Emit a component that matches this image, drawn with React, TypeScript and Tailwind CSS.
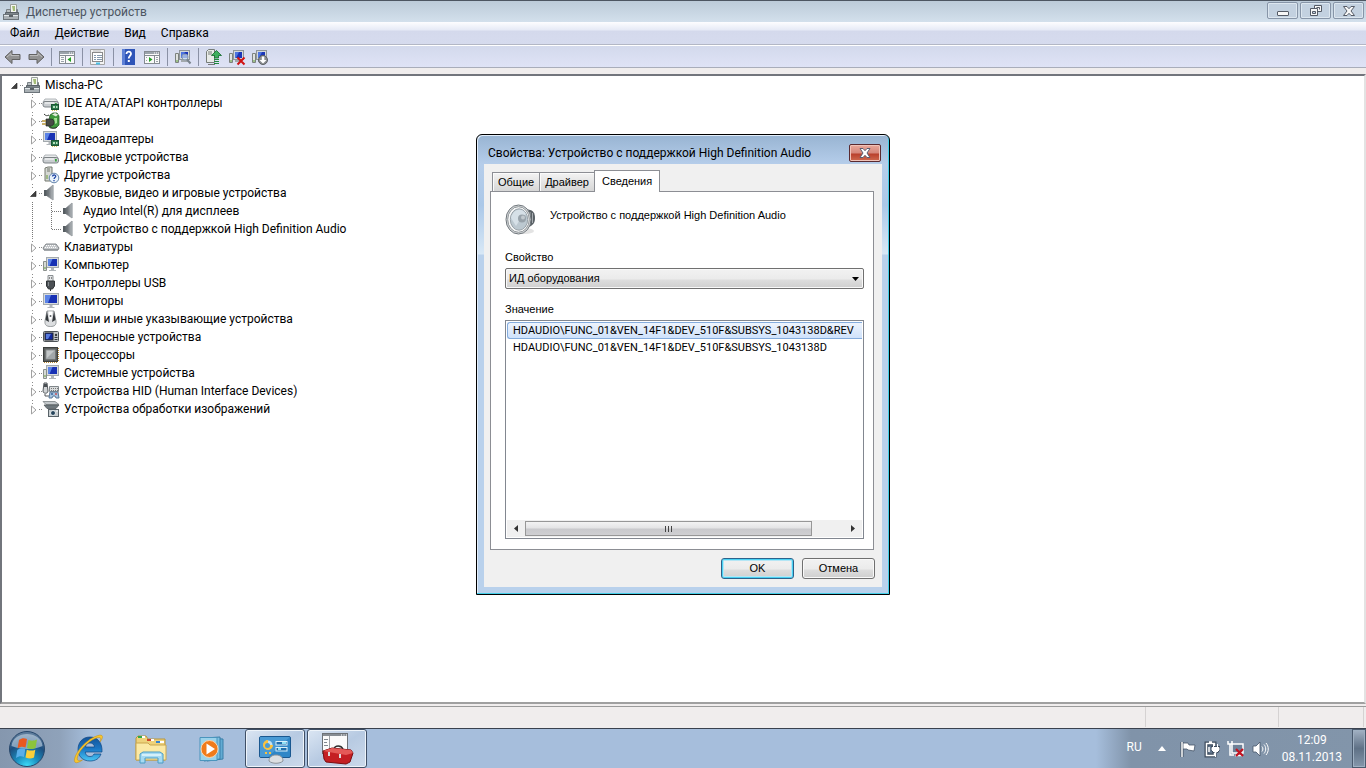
import type { ReactNode } from "react"

const toolbarFg = "w-[18px] h-[18px] shrink-0"

function Icon({ children, size = "w-[18px] h-[18px]", box = "0 0 18 18" }: { children: ReactNode; size?: string; box?: string }) {
  return (
    <svg className={`${size} shrink-0`} viewBox={box} aria-hidden="true">
      {children}
    </svg>
  )
}

/* ---------- device icons ---------- */

function PrinterPcIcon() {
  return (
    <Icon>
      <path d="M8.500 1.500h6v8h-6z" fill="#f4f6f0" stroke="#9aa09c" />
      <path d="M10 3h3v5h-2z" fill="#a5bd78" />
      <path d="M4.500 9.500v-3h4v3M14.500 9.500v-3h1v3" fill="#b9bfc2" stroke="#7a8286" />
      <path d="M3.500 9.500h13v3h-13z" fill="#7f878c" stroke="#596167" />
      <rect x="1.500" y="11.500" width="15" height="5" fill="#a9b0b4" stroke="#6c747a" />
      <path d="M2 12.500h14" stroke="#e3e8ea" />
      <rect x="7" y="12" width="4" height="2" fill="#5a6166" />
    </Icon>
  )
}

function Drive({ y = 4 }: { y?: number }) {
  return (
    <g transform={`translate(0 ${y})`}>
      <path d="M3 1h11l2 3H1z" fill="#e9ebec" stroke="#a0a5a9" strokeWidth=".8" />
      <rect x="1" y="3.500" width="15.500" height="5.500" rx="2" fill="#c9cdd0" stroke="#73797d" strokeWidth=".9" />
      <path d="M3 5h9" stroke="#fff" />
      <rect x="13" y="5" width="1.800" height="2.500" fill="#3aa13e" />
    </g>
  )
}

function Chip() {
  return (
    <g>
      <rect x="9.500" y="10.500" width="7" height="5" fill="#2c7a4b" stroke="#1d5535" />
      <path d="M11 12h2v2h-2zM14 12h1.500v2H14z" fill="#b8e0bf" />
      <path d="M10 16.500h6" stroke="#d9c25b" strokeDasharray="1 1" />
    </g>
  )
}

function Screen({ x = 2, y = 2, w = 14, h = 10 }: { x?: number; y?: number; w?: number; h?: number }) {
  return (
    <g>
      <rect x={x + 0.5} y={y + 0.5} width={w} height={h} fill="#d7dbdd" stroke="#a4aaae" />
      <rect x={x + 2} y={y + 2} width={w - 3} height={h - 3} fill="#1731b4" />
      <path d={`M${x + 2} ${y + 2}h${(w - 3) / 2}l-3 ${h - 3}h-${(w - 3) / 2 - 3}z`} fill="#5b83e6" />
      <path d={`M${x + w / 2 - 1} ${y + h + 1}h3v2h2v1h-7v-1h2z`} fill="#b1b6ba" />
    </g>
  )
}

function IdeIcon() {
  return <Icon><Drive y={4} /><Chip /></Icon>
}

function BatteryIcon() {
  return (
    <Icon>
      <path d="M8 3l3-2h4l2 3v9l-3 3H8l-2-3z" fill="#3f9a3d" stroke="#2b5e2c" strokeWidth=".8" />
      <path d="M10 2.500l3-1.500 3 1.500-2 2z" fill="#e3ecdd" />
      <path d="M12 6h3v5l-2 1z" fill="#a3e294" />
      <path d="M4 7h4c3 0 4 1 4 3.500S10 14 8 14H4z" fill="#484b46" stroke="#252825" strokeWidth=".7" />
      <path d="M0 9h4M0 12h4" stroke="#b8963c" strokeWidth="1.300" />
      <path d="M2 2c2 2 3 2 5 1M8 14c1 3 4 3 7 1" stroke="#343734" fill="none" />
    </Icon>
  )
}

function VideoIcon() {
  return <Icon><Screen x={1} y={1} w={13} h={10} /><Chip /></Icon>
}

function DiskIcon() {
  return <Icon><Drive y={6} /></Icon>
}

function OtherIcon() {
  return (
    <Icon>
      <path d="M3 2l3-1h4v14H3z" fill="#d5d8d4" stroke="#74796f" />
      <path d="M5 3h3M5 5h3" stroke="#74796f" />
      <path d="M5 9v4" stroke="#6a9b35" />
      <circle cx="12" cy="12" r="4.800" fill="#e9f2fb" stroke="#6485aa" />
      <path d="M10.500 10.500c0-2 3.500-2 3.200 0-.2 1.200-1.600 1.100-1.600 2.500M12 14v1.200" stroke="#2146a6" fill="none" strokeWidth="1.300" />
    </Icon>
  )
}

function SpeakerIcon() {
  return (
    <Icon>
      <defs>
        <linearGradient id="cone" x1="0" x2="1">
          <stop offset="0" stopColor="#5c6267" />
          <stop offset="1" stopColor="#b5babe" />
        </linearGradient>
      </defs>
      <path d="M2 6h4v6H2z" fill="#565d62" />
      <path d="M5 6l6-5v15l-6-4z" fill="url(#cone)" stroke="#81878c" strokeWidth=".6" />
      <path d="M11 1v15" stroke="#a5abaf" />
    </Icon>
  )
}

function KeyboardIcon() {
  return (
    <Icon>
      <path d="M4 6h10l3 4-1 2H2l-1-2z" fill="#c5c8cb" stroke="#6b7074" strokeWidth=".8" />
      <path d="M4 7.500h10M3 9.500h12" stroke="#fff" strokeDasharray="1 1" />
      <path d="M2 12h14" stroke="#868b8f" />
    </Icon>
  )
}

function ComputerIcon() {
  return (
    <Icon>
      <Screen x={4} y={1} w={12} h={10} />
      <path d="M1.500 5.500h3v9h-3z" fill="#d6dad6" stroke="#8a908c" />
      <path d="M3 11v2" stroke="#69a03c" />
    </Icon>
  )
}

function UsbIcon() {
  return (
    <Icon>
      <path d="M6 1.500h5v6H6z" fill="#e4e7e9" stroke="#8a8f92" />
      <path d="M7 3h1v2H7zM9 3h1v2H9z" fill="#888" />
      <path d="M4.500 7h8v5l-2 3h-4l-2-3z" fill="#4b5054" stroke="#303437" />
      <path d="M8 15h1v2H8z" fill="#303437" />
      <path d="M6.500 8v4" stroke="#868c90" />
    </Icon>
  )
}

function MonitorIcon() {
  return <Icon><Screen x={1} y={1} w={15} h={11} /></Icon>
}

function MouseIcon() {
  return (
    <Icon>
      <path d="M5 1h7l2 10c.5 4-1.500 5.500-5.500 5.500S2.500 15 3 11z" fill="#dcdee0" stroke="#84898c" strokeWidth=".8" />
      <path d="M5 1L3.500 10 7 12zM12 1l1.500 9-3.500 2z" fill="#34383c" />
      <path d="M6.500 1.500h4l-1 8h-2z" fill="#fff" />
      <circle cx="8.500" cy="6" r="1" fill="#5b6064" />
    </Icon>
  )
}

function PortableIcon() {
  return (
    <Icon>
      <rect x="1.500" y="3.500" width="15" height="10" rx="1" fill="#c3c7ca" stroke="#4e5357" />
      <rect x="3" y="5" width="8" height="7" fill="#10289c" stroke="#26292c" />
      <path d="M4 6h5l-3 5H4z" fill="#5679dc" />
      <circle cx="14" cy="7" r="1.200" fill="#34383b" />
      <path d="M12.500 9.500h3M12.500 11.500h3" stroke="#34383b" />
    </Icon>
  )
}

function CpuIcon() {
  return (
    <Icon>
      <path d="M2 16.500h14M16.500 2v14" stroke="#b88b36" strokeDasharray="1 1" />
      <rect x="1.500" y="1.500" width="14" height="14" fill="#5b5e5d" stroke="#3c3f3e" />
      <rect x="4" y="4" width="9" height="9" fill="#c4c8c9" stroke="#8d9294" />
      <path d="M4 13l9-9v9z" fill="#a2a7a9" />
    </Icon>
  )
}

function HidIcon() {
  return (
    <Icon>
      <path d="M2 1h3l1 8c0 3-5 3-5 0z" fill="#d0d3d5" stroke="#54595d" />
      <path d="M2 2h3v3H2z" fill="#4a4f53" />
      <path d="M7.500 4.500h9v5h-9z" fill="#d9dcdd" stroke="#80868a" />
      <path d="M9 6.500h7M9 8.500h7" stroke="#777" strokeDasharray="1 1" />
      <path d="M3 12v2h4" stroke="#54595d" fill="none" />
      <path d="M8 10h8l1 6h-3l-1-2h-2l-1 2H7z" fill="#a7c2df" stroke="#5b7898" />
      <circle cx="10" cy="12" r=".9" fill="#2d5d94" />
      <circle cx="14" cy="12" r=".9" fill="#c44" />
    </Icon>
  )
}

function ImagingIcon() {
  return (
    <Icon>
      <path d="M1 1.500h12l4 3H4z" fill="#c4c9cc" stroke="#7b8184" strokeWidth=".8" />
      <path d="M2 5h15l-3 3.500H5z" fill="#6f787d" stroke="#545a5e" strokeWidth=".8" />
      <rect x="6.500" y="9.500" width="10" height="7" fill="#c8ced1" stroke="#586268" />
      <circle cx="11" cy="13" r="2.500" fill="#27455c" stroke="#e9edef" />
      <path d="M14 11h2" stroke="#fff" />
    </Icon>
  )
}

/* ---------- tree ---------- */

type TreeItem = { name: string; icon: ReactNode; open?: boolean; children?: { name: string }[] }

const devices: TreeItem[] = [
  { name: "IDE ATA/ATAPI контроллеры", icon: <IdeIcon /> },
  { name: "Батареи", icon: <BatteryIcon /> },
  { name: "Видеоадаптеры", icon: <VideoIcon /> },
  { name: "Дисковые устройства", icon: <DiskIcon /> },
  { name: "Другие устройства", icon: <OtherIcon /> },
  {
    name: "Звуковые, видео и игровые устройства",
    icon: <SpeakerIcon />,
    open: true,
    children: [{ name: "Аудио Intel(R) для дисплеев" }, { name: "Устройство с поддержкой High Definition Audio" }],
  },
  { name: "Клавиатуры", icon: <KeyboardIcon /> },
  { name: "Компьютер", icon: <ComputerIcon /> },
  { name: "Контроллеры USB", icon: <UsbIcon /> },
  { name: "Мониторы", icon: <MonitorIcon /> },
  { name: "Мыши и иные указывающие устройства", icon: <MouseIcon /> },
  { name: "Переносные устройства", icon: <PortableIcon /> },
  { name: "Процессоры", icon: <CpuIcon /> },
  { name: "Системные устройства", icon: <ComputerIcon /> },
  { name: "Устройства HID (Human Interface Devices)", icon: <HidIcon /> },
  { name: "Устройства обработки изображений", icon: <ImagingIcon /> },
]

function Expander({ open, root }: { open?: boolean; root?: boolean }) {
  return (
    <Icon size="w-[19px] h-[18px]" box="0 0 19 18">
      {!root && <path d="M9.500 0v1M9.500 3v1" stroke="#8a8a8a" />}
      <path d="M16 9.500h1M18 9.500h1" stroke="#8a8a8a" />
      {open ? (
        <path d="M13 7v5.500H7.500z" fill="#404040" stroke="#202020" strokeWidth=".6" />
      ) : (
        <path d="M8.500 6v8l4.500-4z" fill="#fff" stroke="#a0a0a0" />
      )}
    </Icon>
  )
}

function Branch({ last }: { last: boolean }) {
  return (
    <Icon size="w-[19px] h-[18px]" box="0 0 19 18">
      <path d={last ? "M9.500 0v10M10 9.500h9" : "M9.500 0v18M10 9.500h9"} stroke="#777" strokeDasharray="1 1" />
    </Icon>
  )
}

function Tree() {
  return (
    <ul className="pl-[2px] text-[12px] leading-[18px] text-black">
      <li>
        <div className="flex h-[18px] items-center">
          <Expander open root />
          <PrinterPcIcon />
          <span className="ml-1">Mischa-PC</span>
        </div>
        <ul className="pl-[19px]">
          {devices.map((d) => (
            <li key={d.name}>
              <div className="flex h-[18px] items-center">
                <Expander open={d.open} />
                {d.icon}
                <span className="ml-1 whitespace-nowrap">{d.name}</span>
              </div>
              {d.children && (
                <ul>
                  {d.children.map((c, i) => (
                    <li key={c.name} className="flex h-[18px] items-center">
                      <Icon size="w-[19px] h-[18px]" box="0 0 19 18">
                        <path d="M9.500 0v18" stroke="#777" strokeDasharray="1 1" />
                      </Icon>
                      <Branch last={i === d.children!.length - 1} />
                      <SpeakerIcon />
                      <span className="ml-1 whitespace-nowrap">{c.name}</span>
                    </li>
                  ))}
                </ul>
              )}
            </li>
          ))}
        </ul>
      </li>
    </ul>
  )
}

/* ---------- toolbar ---------- */

function ArrowIcon({ back }: { back?: boolean }) {
  return (
    <svg className={toolbarFg} viewBox="0 0 18 18">
      <path
        d={back ? "M1 9l7-6.500v4h8v5H8v4z" : "M17 9l-7-6.500v4H2v5h8v4z"}
        fill="#929292"
        stroke="#626262"
      />
      <path d={back ? "M3 9l4-3.500v2h8" : "M3 7.500h8v-2l4 3.500"} stroke="#bcbcbc" fill="none" />
    </svg>
  )
}

function PaneIcon({ right }: { right?: boolean }) {
  return (
    <svg className={toolbarFg} viewBox="0 0 18 18">
      <rect x="1.500" y="3.500" width="15" height="12" fill="#fafafa" stroke="#858b92" />
      <path d="M2 5h14" stroke="#9ba3ab" strokeWidth="2" />
      <path d="M11 5h1M13 5h1M15 5h1" stroke="#fff" />
      <path d="M2 7.500h14" stroke="#858b92" />
      {right ? (
        <>
          <path d="M11.500 8v7" stroke="#858b92" />
          <path d="M13 9.500h2M13 11.500h2M13 13.500h2M3 9.500h1M3 12.500h1" stroke="#9ba3ab" />
          <path d="M6 9v5l3.500-2.500z" fill="#22a022" />
        </>
      ) : (
        <>
          <path d="M7.500 8v7" stroke="#858b92" />
          <path d="M3 9.500h3M3 11.500h3M3 13.500h3" stroke="#9ba3ab" />
          <path d="M13 9v5l-3.500-2.500z" fill="#22a022" />
        </>
      )}
    </svg>
  )
}

function PropertiesIcon() {
  return (
    <svg className={toolbarFg} viewBox="0 0 18 18">
      <path d="M1.500 1.500h14v15h-14z" fill="#f3f3f3" stroke="#a4a4a4" />
      <rect x="3.500" y="4.500" width="10" height="9" fill="#fff" stroke="#8a8a8a" />
      <path d="M4 3h8" stroke="#bbb" />
      <path d="M5 7.500h2M8 7.500h5M5 9.500h2M8 9.500h5M5 11.500h2M8 11.500h5" stroke="#8599ad" />
      <path d="M7 15.500h4" stroke="#4bc0e6" strokeWidth="2" />
    </svg>
  )
}

function HelpIcon() {
  return (
    <svg className={toolbarFg} viewBox="0 0 18 18">
      <rect x="2" y="1" width="13" height="16" fill="#2f55b8" />
      <path d="M2 1h3v16H2z" fill="#5d80d6" />
      <path d="M6.500 6c0-3.300 5-3 4.500 0-.3 1.800-2.300 2-2.300 4.500" stroke="#fff" strokeWidth="1.800" fill="none" />
      <rect x="7.800" y="12" width="2" height="2" fill="#fff" />
    </svg>
  )
}

function MiniPc() {
  return (
    <g>
      <path d="M1.500 5.500h3v9h-3z" fill="#dfe2e0" stroke="#7c827e" />
      <path d="M3 12v2" stroke="#5aa02e" />
      <rect x="5.500" y="2.500" width="10" height="9" fill="#d3d8db" stroke="#8e959a" />
      <path d="M7 4h7v6H7z" fill="#1b36b8" />
      <path d="M7 4h4l-3 6H7z" fill="#4d74df" />
      <path d="M7 13h7" stroke="#a3a9ad" strokeWidth="2" />
    </g>
  )
}

function ScanIcon() {
  return (
    <svg className={toolbarFg} viewBox="0 0 18 18">
      <MiniPc />
      <circle cx="11" cy="9" r="3" fill="#cfe4f5" fillOpacity=".7" stroke="#8b9dae" />
      <path d="M13 11.500l3.500 4" stroke="#7a848e" strokeWidth="2" />
    </svg>
  )
}

function UpdateIcon() {
  return (
    <svg className={toolbarFg} viewBox="0 0 18 18">
      <path d="M1.500 3.500l2-2h6v13h-8z" fill="#e8ebe8" stroke="#767c78" />
      <path d="M3 4h4M3 6h4" stroke="#767c78" />
      <path d="M3 16.500h7" stroke="#777" />
      <path d="M11.500 2.500l5 5h-3V10h-4V7.500h-3z" fill="#3eaf5e" stroke="#136a2b" strokeWidth=".8" />
      <path d="M9 11.500h5M9 13.500h5M9 15.500h5" stroke="#1f8a3e" />
    </svg>
  )
}

function RemoveIcon() {
  return (
    <svg className={toolbarFg} viewBox="0 0 18 18">
      <MiniPc />
      <path d="M9.500 9.500l7 7M16.500 9.500l-7 7" stroke="#d01212" strokeWidth="2" />
    </svg>
  )
}

function DisableIcon() {
  return (
    <svg className={toolbarFg} viewBox="0 0 18 18">
      <MiniPc />
      <circle cx="12" cy="12" r="4.500" fill="#8a8d90" stroke="#5d6063" />
      <path d="M10.800 8.500h2.500v3.500h2.200L12 15.500 8.500 12h2.300z" fill="#fff" />
    </svg>
  )
}

function ToolButton({ label, children }: { label: string; children: ReactNode }) {
  return (
    <button type="button" aria-label={label} className="flex items-center">
      {children}
    </button>
  )
}

function Separator() {
  return <span className="mx-[6px] h-[18px] w-px bg-[#8a91a5]" />
}

function Toolbar() {
  return (
    <div className="flex h-[23px] items-center border-b border-t border-b-[#a9adba] border-t-white bg-gradient-to-b from-[#d3d9ec] to-[#dfe3f6] pl-1">
      <div className="flex gap-[5px]">
        <ToolButton label="Назад"><ArrowIcon back /></ToolButton>
        <ToolButton label="Вперед"><ArrowIcon /></ToolButton>
      </div>
      <Separator />
      <ToolButton label="Дерево консоли"><PaneIcon /></ToolButton>
      <Separator />
      <ToolButton label="Свойства"><PropertiesIcon /></ToolButton>
      <Separator />
      <div className="flex gap-[5px]">
        <ToolButton label="Справка"><HelpIcon /></ToolButton>
        <ToolButton label="Область действий"><PaneIcon right /></ToolButton>
      </div>
      <Separator />
      <ToolButton label="Обновить конфигурацию"><ScanIcon /></ToolButton>
      <Separator />
      <div className="flex gap-[5px]">
        <ToolButton label="Обновить драйверы"><UpdateIcon /></ToolButton>
        <ToolButton label="Удалить"><RemoveIcon /></ToolButton>
        <ToolButton label="Отключить"><DisableIcon /></ToolButton>
      </div>
    </div>
  )
}

/* ---------- main window ---------- */

function CaptionButton({ label, children }: { label: string; children: ReactNode }) {
  return (
    <button
      type="button"
      aria-label={label}
      className="flex h-[17px] w-[31px] items-center justify-center rounded-[2px] border border-[#8795a8] bg-[#c3d1e0] shadow-[inset_0_0_0_1px_#dce6ef]"
    >
      {children}
    </button>
  )
}

function TitleBar() {
  return (
    <header className="flex h-[22px] items-center border-t border-[#4d5662] bg-gradient-to-b from-[#bccbd9] to-[#d3e0ec] pl-[2px] pr-[2px]">
      <PrinterPcIcon />
      <h1 className="ml-[6px] flex-1 text-[12px] leading-[18px] text-[#4c5561]">Диспетчер устройств</h1>
      <div className="flex gap-[2px] self-start pt-px">
        <CaptionButton label="Свернуть">
          <Icon size="w-[14px] h-[12px]" box="0 0 14 12">
            <rect x="1.500" y="6.500" width="11" height="4" rx=".5" fill="#f7f7f7" stroke="#555b66" />
          </Icon>
        </CaptionButton>
        <CaptionButton label="Восстановить">
          <Icon size="w-[14px] h-[12px]" box="0 0 14 12">
            <path d="M5.500.5h7v6h-7z" fill="#f7f7f7" stroke="#555b66" />
            <path d="M7.500 2.500h3v2" fill="none" stroke="#555b66" />
            <path d="M1.500 3.500h7v7h-7z" fill="#f7f7f7" stroke="#555b66" />
            <path d="M3.500 6.500h3v2h-3z" fill="#c3d1e0" stroke="#555b66" />
          </Icon>
        </CaptionButton>
        <CaptionButton label="Закрыть">
          <Icon size="w-[14px] h-[12px]" box="0 0 14 12">
            <path d="M1.500 1.500h3.500l2 2.200 2-2.200h3.500L9 6l3.500 4.500H9L7 8.300 5 10.500H1.500L5 6z" fill="#f7f7f7" stroke="#555b66" />
          </Icon>
        </CaptionButton>
      </div>
    </header>
  )
}

const menus = ["Файл", "Действие", "Вид", "Справка"]

function MenuBar() {
  return (
    <nav className="flex h-[23px] items-center gap-[15px] border-b border-[#b3b7c5] bg-[linear-gradient(#fdfdff_0,#e6eaf6_8px,#d4d9ec_9px,#d6dbee_100%)] pl-[10px] text-[12px] text-black">
      {menus.map((m) => (
        <button type="button" key={m}>
          {m}
        </button>
      ))}
    </nav>
  )
}

/* ---------- properties dialog ---------- */

function BigSpeaker() {
  return (
    <svg className="h-[32px] w-[32px] shrink-0" viewBox="0 0 32 32" aria-hidden="true">
      <ellipse cx="20" cy="27" rx="9" ry="3" fill="#e3e3e3" />
      <path d="M14 2l11 4c4 1 4 13 0 15l-10 8z" fill="#747b80" />
      <path d="M24 6c4 0 6 3 6 8s-2 7-6 9z" fill="#596065" />
      <path d="M25 8v12M27.500 9v10" stroke="#a9aeb2" />
      <ellipse cx="13.500" cy="15.500" rx="12.500" ry="14.500" fill="#d9dcde" stroke="#6f767b" />
      <ellipse cx="13.500" cy="15.500" rx="10.800" ry="12.800" fill="#f7f8f8" stroke="#8d9397" />
      <ellipse cx="14" cy="15.500" rx="8.700" ry="10.700" fill="#bcc8d0" stroke="#98a1a8" />
      <path d="M6 14c2-9 11-11 15-4l-5 4-5 8z" fill="#d6e0e7" />
      <circle cx="17" cy="14.500" r="4" fill="#98a2aa" />
      <circle cx="18" cy="13.500" r="2" fill="#c1c9ce" />
    </svg>
  )
}

const values = [
  "HDAUDIO\\FUNC_01&VEN_14F1&DEV_510F&SUBSYS_1043138D&REV",
  "HDAUDIO\\FUNC_01&VEN_14F1&DEV_510F&SUBSYS_1043138D",
]

function Tab({ children }: { children: ReactNode }) {
  return (
    <button
      type="button"
      role="tab"
      aria-selected="false"
      className="-mr-px h-[19px] border border-b-0 border-[#8c8e94] bg-gradient-to-b from-[#f3f3f3] to-[#d6d6d6] px-[5px] shadow-[inset_1px_1px_0_#fbfbfb]"
    >
      {children}
    </button>
  )
}

function ScrollBar() {
  return (
    <div className="flex h-[17px] items-center bg-[#f0f0f0]">
      <button type="button" aria-label="Влево" className="flex w-[18px] justify-center">
        <svg className="h-[7px] w-[4px]" viewBox="0 0 4 7"><path d="M4 0v7L0 3.500z" fill="#333" /></svg>
      </button>
      <div className="flex flex-1">
        <div className="flex h-[15px] w-[90%] items-center justify-center gap-[2px] border border-[#979797] bg-[linear-gradient(#f3f3f3_0,#e4e4e5_6px,#c9c9cc_7px,#cfcfd2_100%)]">
          <span className="h-[6px] w-px bg-[#444]" />
          <span className="h-[6px] w-px bg-[#444]" />
          <span className="h-[6px] w-px bg-[#444]" />
        </div>
      </div>
      <button type="button" aria-label="Вправо" className="flex w-[18px] justify-center">
        <svg className="h-[7px] w-[4px]" viewBox="0 0 4 7"><path d="M0 0v7l4-3.500z" fill="#333" /></svg>
      </button>
    </div>
  )
}

function PropertiesDialog() {
  return (
    <section
      role="dialog"
      aria-labelledby="dialog-title"
      className="absolute left-1/2 top-[134px] w-[414px] -translate-x-1/2 rounded-t-[6px] border border-black bg-[linear-gradient(#98b4d2_0,#b5cdea_29px,#abc8e8_70px,#d8e8f6_119px,#b9d1ec_120px)] px-[7px] pb-[7px] text-[11px] text-black shadow-[inset_-1px_-1px_0_#43cfe8,inset_1px_1px_0_#e3eefa]"
    >
      <div className="flex h-[29px] items-center justify-between pl-1">
        <h2 id="dialog-title" className="pt-[6px] font-['Roboto','Noto_Sans',sans-serif] text-[12px] leading-[20px]">
          Свойства: Устройство с поддержкой High Definition Audio
        </h2>
        <button
          type="button"
          aria-label="Закрыть"
          className="mr-px mt-[6px] flex h-[18px] w-[32px] items-center justify-center rounded-[2px] border border-[#5a2a30] bg-[linear-gradient(#e9a99c_0,#d5867a_8px,#b9402c_9px,#cf6a50_100%)] shadow-[inset_0_0_0_1px_#f0c3b9]"
        >
          <Icon size="w-[14px] h-[12px]" box="0 0 14 12">
            <path d="M2 1.500h3l2 2.200 2-2.200h3L9 6l3 4.500H9L7 8.300 5 10.500H2L5 6z" fill="#fff" stroke="#5a5f73" />
          </Icon>
        </button>
      </div>

      <div className="bg-[#f0f0f0] pb-2 pl-[6px] pr-2 pt-[6px]">
        <div role="tablist" className="flex items-end pl-[2px]">
          <Tab>Общие</Tab>
          <Tab>Драйвер</Tab>
          <button
            type="button"
            role="tab"
            aria-selected="true"
            className="relative -mb-px h-[22px] border border-b-0 border-[#8c8e94] bg-white px-[7px]"
          >
            Сведения
          </button>
        </div>

        <div role="tabpanel" className="border border-[#8c8e94] bg-white pb-[10px] pl-[14px] pr-[9px] pt-3">
          <div className="flex gap-[13px]">
            <BigSpeaker />
            <p className="pt-[3px] leading-[16px]">Устройство с поддержкой High Definition Audio</p>
          </div>

          <label htmlFor="property" className="mt-[13px] block leading-[16px]">
            Свойство
          </label>
          <div className="relative mt-[3px]">
            <select
              id="property"
              className="block h-[21px] w-full appearance-none rounded-[2px] border border-[#707070] bg-[linear-gradient(#f2f2f2_0,#ebebeb_10px,#dddddd_11px,#cfcfcf_100%)] px-[3px] shadow-[inset_0_0_0_1px_#f9f9f9]"
            >
              <option>ИД оборудования</option>
            </select>
            <svg className="pointer-events-none absolute right-[5px] top-[9px] h-[4px] w-[7px]" viewBox="0 0 7 4">
              <path d="M0 0h7L3.500 4z" fill="#000" />
            </svg>
          </div>

          <p id="value-label" className="mt-3 leading-[16px]">Значение</p>
          <div className="mt-[3px] flex h-[219px] flex-col border border-[#828790] p-px">
            <ul
              role="listbox"
              aria-labelledby="value-label"
              className="flex-1 overflow-hidden font-['Roboto','Liberation_Sans',sans-serif] text-[11px] leading-[15px]"
            >
              {values.map((v, i) => (
                <li
                  key={v}
                  role="option"
                  aria-selected={i === 0}
                  className={
                    i === 0
                      ? "whitespace-nowrap rounded-l-[3px] border border-r-0 border-[#84acdd] bg-gradient-to-b from-[#eef4fd] to-[#cfe2fb] pl-[5px]"
                      : "whitespace-nowrap border border-r-0 border-transparent pl-[5px]"
                  }
                >
                  {v}
                </li>
              ))}
            </ul>
            <ScrollBar />
          </div>
        </div>

        <div className="-mr-px mt-2 flex justify-end gap-2">
          <button
            type="button"
            className="h-[21px] w-[73px] rounded-[3px] border border-[#2c628b] bg-[linear-gradient(#f2f2f2_0,#ebebeb_10px,#dddddd_11px,#cfcfcf_100%)] shadow-[inset_0_0_0_1px_#48d1f3,inset_0_0_0_2px_#b5e6f5]"
          >
            OK
          </button>
          <button
            type="button"
            className="h-[21px] w-[73px] rounded-[3px] border border-[#707070] bg-[linear-gradient(#f2f2f2_0,#ebebeb_10px,#dddddd_11px,#cfcfcf_100%)] shadow-[inset_0_0_0_1px_#f9f9f9]"
          >
            Отмена
          </button>
        </div>
      </div>
    </section>
  )
}

/* ---------- taskbar ---------- */

function StartOrb() {
  return (
    <svg className="h-[38px] w-[38px]" viewBox="0 0 38 38">
      <defs>
        <radialGradient id="orb" cx=".5" cy="1" r=".95">
          <stop offset="0" stopColor="#3fe0fb" />
          <stop offset=".35" stopColor="#1b8fc0" />
          <stop offset=".7" stopColor="#1d4f80" />
          <stop offset="1" stopColor="#5d7c9c" />
        </radialGradient>
      </defs>
      <circle cx="19" cy="19" r="17.500" fill="url(#orb)" stroke="#27476b" />
      <path d="M3.500 16C5 0 33 0 34.500 16c-8 4-22 4-31 0z" fill="#e6f0f8" fillOpacity=".5" />
      <path d="M11 10c3-2 5-2 8-1l-1.500 8.500c-3-1-5-1-8 1z" fill="#e8591f" />
      <path d="M20.500 10c3 1 5 1 8.500-.5L27.500 18c-3 1.500-5.500 1-8.500 0z" fill="#8cc43c" />
      <path d="M9.300 20c3-2 5-1.800 8-.8L16 27c-3-1-5-1-8 1z" fill="#58aeea" />
      <path d="M18.800 19.700c3 1 5.500 1.300 8.500 0L26 27.500c-3 1.500-5.500 1-8.500 0z" fill="#fbcf3a" />
    </svg>
  )
}

function IeIcon() {
  return (
    <svg className="h-[32px] w-[32px]" viewBox="0 0 32 32">
      <defs>
        <linearGradient id="ie" x2="0" y2="1">
          <stop offset="0" stopColor="#135297" />
          <stop offset=".5" stopColor="#1b78c5" />
          <stop offset="1" stopColor="#49c7f4" />
        </linearGradient>
      </defs>
      <path
        d="M17 4C9 4 5 10 5 16.500S9.500 28 17 28c5.500 0 9.500-2.500 11-7h-7c-.7 1.700-2 2.500-4 2.500-3 0-4.500-1.700-4.700-4.500H29C29.500 10 25 4 17 4zm-4.500 10c.4-2.600 2-4 4.500-4s4.200 1.400 4.500 4z"
        fill="url(#ie)"
        stroke="#0e4583"
        strokeWidth=".7"
      />
      <path d="M27 9c4-5 3-8-2-6.500C15 5 3 18 1.500 26c-.8 5 3 4.500 8 1-4 1.500-6 .8-5-3C6.500 16 18 6 25 4.500c3-.5 3.200 1 2 4.500z" fill="#f8c62e" stroke="#c08b15" strokeWidth=".5" />
    </svg>
  )
}

function ExplorerIcon() {
  return (
    <svg className="h-[32px] w-[34px]" viewBox="0 0 34 32">
      <path d="M2 5l2-2h8l2 3h17v21H2z" fill="#eed27a" stroke="#b8963f" />
      <path d="M6 4h5M14 7h6M23 9h7" stroke="#fff" strokeWidth="2" />
      <path d="M4 3h4v2H4z" fill="#2fa84b" />
      <path d="M13 6h4v2h-4z" fill="#d2452a" />
      <path d="M22 8h4v2h-4z" fill="#3584d2" />
      <path d="M2 10h12l2 2h16v15H2z" fill="#fbe9a5" stroke="#caa74f" />
      <path d="M6 30v-9l3-2h17l3 2v9h-5v-5H11v5z" fill="#a5daf2" stroke="#4b9cc5" />
      <path d="M8 22h19" stroke="#e6f7fd" strokeWidth="1.500" />
    </svg>
  )
}

function PlayerIcon() {
  return (
    <svg className="h-[32px] w-[32px]" viewBox="0 0 32 32">
      <path d="M10 5l16 1v20l-16 2z" fill="#62abd3" stroke="#397fa9" />
      <path d="M7 5l16-1v22L7 28z" fill="#7ec0e0" stroke="#397fa9" />
      <path d="M3 4.500h17v23H3z" fill="#9bd3eb" stroke="#4a95bd" />
      <circle cx="12.500" cy="16" r="8.500" fill="#f07b1b" stroke="#fbd4ad" />
      <path d="M9.500 10.500v11l8.500-5.500z" fill="#fff" />
    </svg>
  )
}

function ControlPanelIcon() {
  return (
    <svg className="h-[32px] w-[34px]" viewBox="0 0 34 32">
      <rect x="1.500" y="3.500" width="31" height="21" rx="1.500" fill="#2f86c7" stroke="#1a5890" />
      <path d="M2 4h30L10 24H2z" fill="#5ba8dc" fillOpacity=".6" />
      <circle cx="10" cy="12" r="4.500" fill="#bfe2f5" />
      <path d="M10 12V7a5 5 0 1 0 5 5z" fill="#fbc23d" />
      <circle cx="9.500" cy="12.500" r="2.500" fill="#4a9bd3" />
      <rect x="18" y="8.500" width="11" height="3.500" fill="#1f6cab" stroke="#d9f0fb" />
      <rect x="18" y="14.500" width="11" height="3.500" fill="#1f6cab" stroke="#d9f0fb" />
      <path d="M24 10h4M20 16h3" stroke="#8fe0f6" strokeWidth="2" />
      <path d="M7 20h2M11 20h2" stroke="#fbc23d" strokeWidth="2" />
      <path d="M11 28c0-4 3-6 7-6s7 2 7 6c-3 3-11 3-14 0z" fill="#dcdfe2" stroke="#8d9399" />
    </svg>
  )
}

function ToolboxIcon() {
  return (
    <svg className="h-[34px] w-[34px]" viewBox="0 0 34 34">
      <rect x="2.500" y="1.500" width="25" height="20" fill="#fbfbfb" stroke="#6c7176" />
      <path d="M3 3h24" stroke="#878d93" strokeWidth="2" />
      <path d="M21 3h1M23.500 3h1M26 3h1" stroke="#fff" />
      <path d="M9.500 4v17" stroke="#9ca1a6" />
      <path d="M4 7.500h4M4 10.500h3M4 13.500h4" stroke="#808890" />
      <path d="M14 17c1-4 7-4 9 0" fill="none" stroke="#303030" strokeWidth="1.500" />
      <path d="M3 19l9-3 19 2 2 3-3 9-4 2-20-2-2-3z" fill="#c41f23" stroke="#7a0c10" />
      <path d="M3 19l9-3 19 2 2 3-7 2z" fill="#e45a57" />
      <path d="M9 20v4M20 22v4" stroke="#ddd" strokeWidth="2" />
    </svg>
  )
}

function RunningApp({ label, children }: { label: string; children: ReactNode }) {
  return (
    <button
      type="button"
      aria-label={label}
      className="flex h-[39px] w-[60px] items-center justify-center rounded-[3px] border border-[#3f4f66] bg-gradient-to-br from-[#dbe6f3] via-[#b7cae2] to-[#ccdaeb] shadow-[inset_0_0_0_1px_#eef4fa]"
    >
      {children}
    </button>
  )
}

function TrayIcons() {
  return (
    <>
      <Icon size="w-[18px] h-[18px]">
        <path d="M3 2v15" stroke="#3e4c5e" strokeWidth="3" />
        <path d="M4 3h5l1 2h6l-1 6-6-1-1-1H4z" fill="#fff" stroke="#46556a" strokeWidth=".8" />
        <path d="M3 2v15" stroke="#fff" strokeWidth="1.500" />
      </Icon>
      <Icon size="w-[18px] h-[18px]">
        <path d="M3.500 3.500h8v12h-8z" fill="#61758d" stroke="#3e4c5e" strokeWidth="4" />
        <path d="M3.500 3.500h8v12h-8zM6 2h3M6 7v5" fill="none" stroke="#fff" strokeWidth="1.500" />
        <path d="M8 6h9v4l-2 3h-5l-2-3z" fill="#3e4c5e" />
        <path d="M9 7.500h7v2.500l-2 2h-3l-2-2zM10.500 4v4M14.500 4v4M12.500 12v5" fill="#fff" stroke="#fff" />
      </Icon>
      <Icon size="w-[18px] h-[18px]">
        <rect x="5" y="4" width="11" height="9" fill="#6d8198" stroke="#fff" strokeWidth="1.500" />
        <path d="M1 1v3h4V1M3 4v11h4M8 15.500h7" fill="none" stroke="#fff" strokeWidth="1.500" />
        <path d="M9 9l7 7M16 9l-7 7" stroke="#c41320" strokeWidth="2.200" />
      </Icon>
      <Icon size="w-[18px] h-[18px]">
        <path d="M2 6h3l4-4v14l-4-4H2z" fill="#fff" stroke="#46556a" strokeWidth=".8" />
        <path d="M11 6.500c1.200 1.500 1.200 3.500 0 5M13 4.500c2.300 2.500 2.300 6.500 0 9M15 3c3 3.500 3 8.500 0 12" fill="none" stroke="#fff" strokeWidth="1" />
      </Icon>
    </>
  )
}

function Taskbar() {
  return (
    <footer className="flex h-[40px] shrink-0 items-center border-t border-[#3a414e] bg-[linear-gradient(90deg,#8597ae_0,#8fa2ba_60px,#a6bedc_90px,#a6bedc_calc(100%-270px),#8093a9_calc(100%-235px),#8295aa_100%)] pl-2 text-white">
      <button type="button" aria-label="Пуск"><StartOrb /></button>
      <div className="ml-[27px] flex items-center gap-[29px]">
        <button type="button" aria-label="Internet Explorer"><IeIcon /></button>
        <button type="button" aria-label="Проводник"><ExplorerIcon /></button>
        <button type="button" aria-label="Проигрыватель"><PlayerIcon /></button>
      </div>
      <div className="ml-4 flex gap-[2px]">
        <RunningApp label="Панель управления"><ControlPanelIcon /></RunningApp>
        <RunningApp label="Диспетчер устройств"><ToolboxIcon /></RunningApp>
      </div>
      <div className="ml-auto flex items-center">
        <span className="mb-1 mr-4 text-[12px]">RU</span>
        <button type="button" aria-label="Показать скрытые значки" className="mr-[13px]">
          <Icon size="w-[8px] h-[5px]" box="0 0 8 5"><path d="M0 5h8L4 0z" fill="#fff" /></Icon>
        </button>
        <div className="flex items-center gap-[6px]">
          <TrayIcons />
        </div>
        <time className="ml-[13px] mr-[10px] text-center text-[12px] leading-[17px]">
          12:09
          <br />
          08.11.2013
        </time>
      </div>
      <button
        type="button"
        aria-label="Свернуть все окна"
        className="h-[39px] w-[14px] border border-[#4a5a6e] bg-gradient-to-b from-[#a3b2c4] via-[#5f7186] to-[#8597ab] shadow-[inset_0_0_0_1px_#9fb0c2]"
      />
    </footer>
  )
}

export default function App() {
  return (
    <div className="relative flex min-h-screen flex-col bg-[#f0eded] font-['Roboto','Noto_Sans',sans-serif]">
      <TitleBar />
      <MenuBar />
      <Toolbar />
      <main className="mt-[6px] flex-1 border-2 border-[#72757c] border-b-[#a0a0a0] border-r-[#e3e3e3] bg-white">
        <Tree />
      </main>
      <div className="mb-px mt-[2px] flex h-[21px] shrink-0 justify-end border-t border-[#9b9b9b] bg-[#f0eded] pr-[2px]">
        <span className="w-[133px] border-l border-[#d5d2d2]" />
        <span className="w-[86px] border-x border-[#d5d2d2]" />
      </div>
      <div className="font-['Liberation_Sans',Arial,sans-serif]">
        <PropertiesDialog />
      </div>
      <Taskbar />
    </div>
  )
}
